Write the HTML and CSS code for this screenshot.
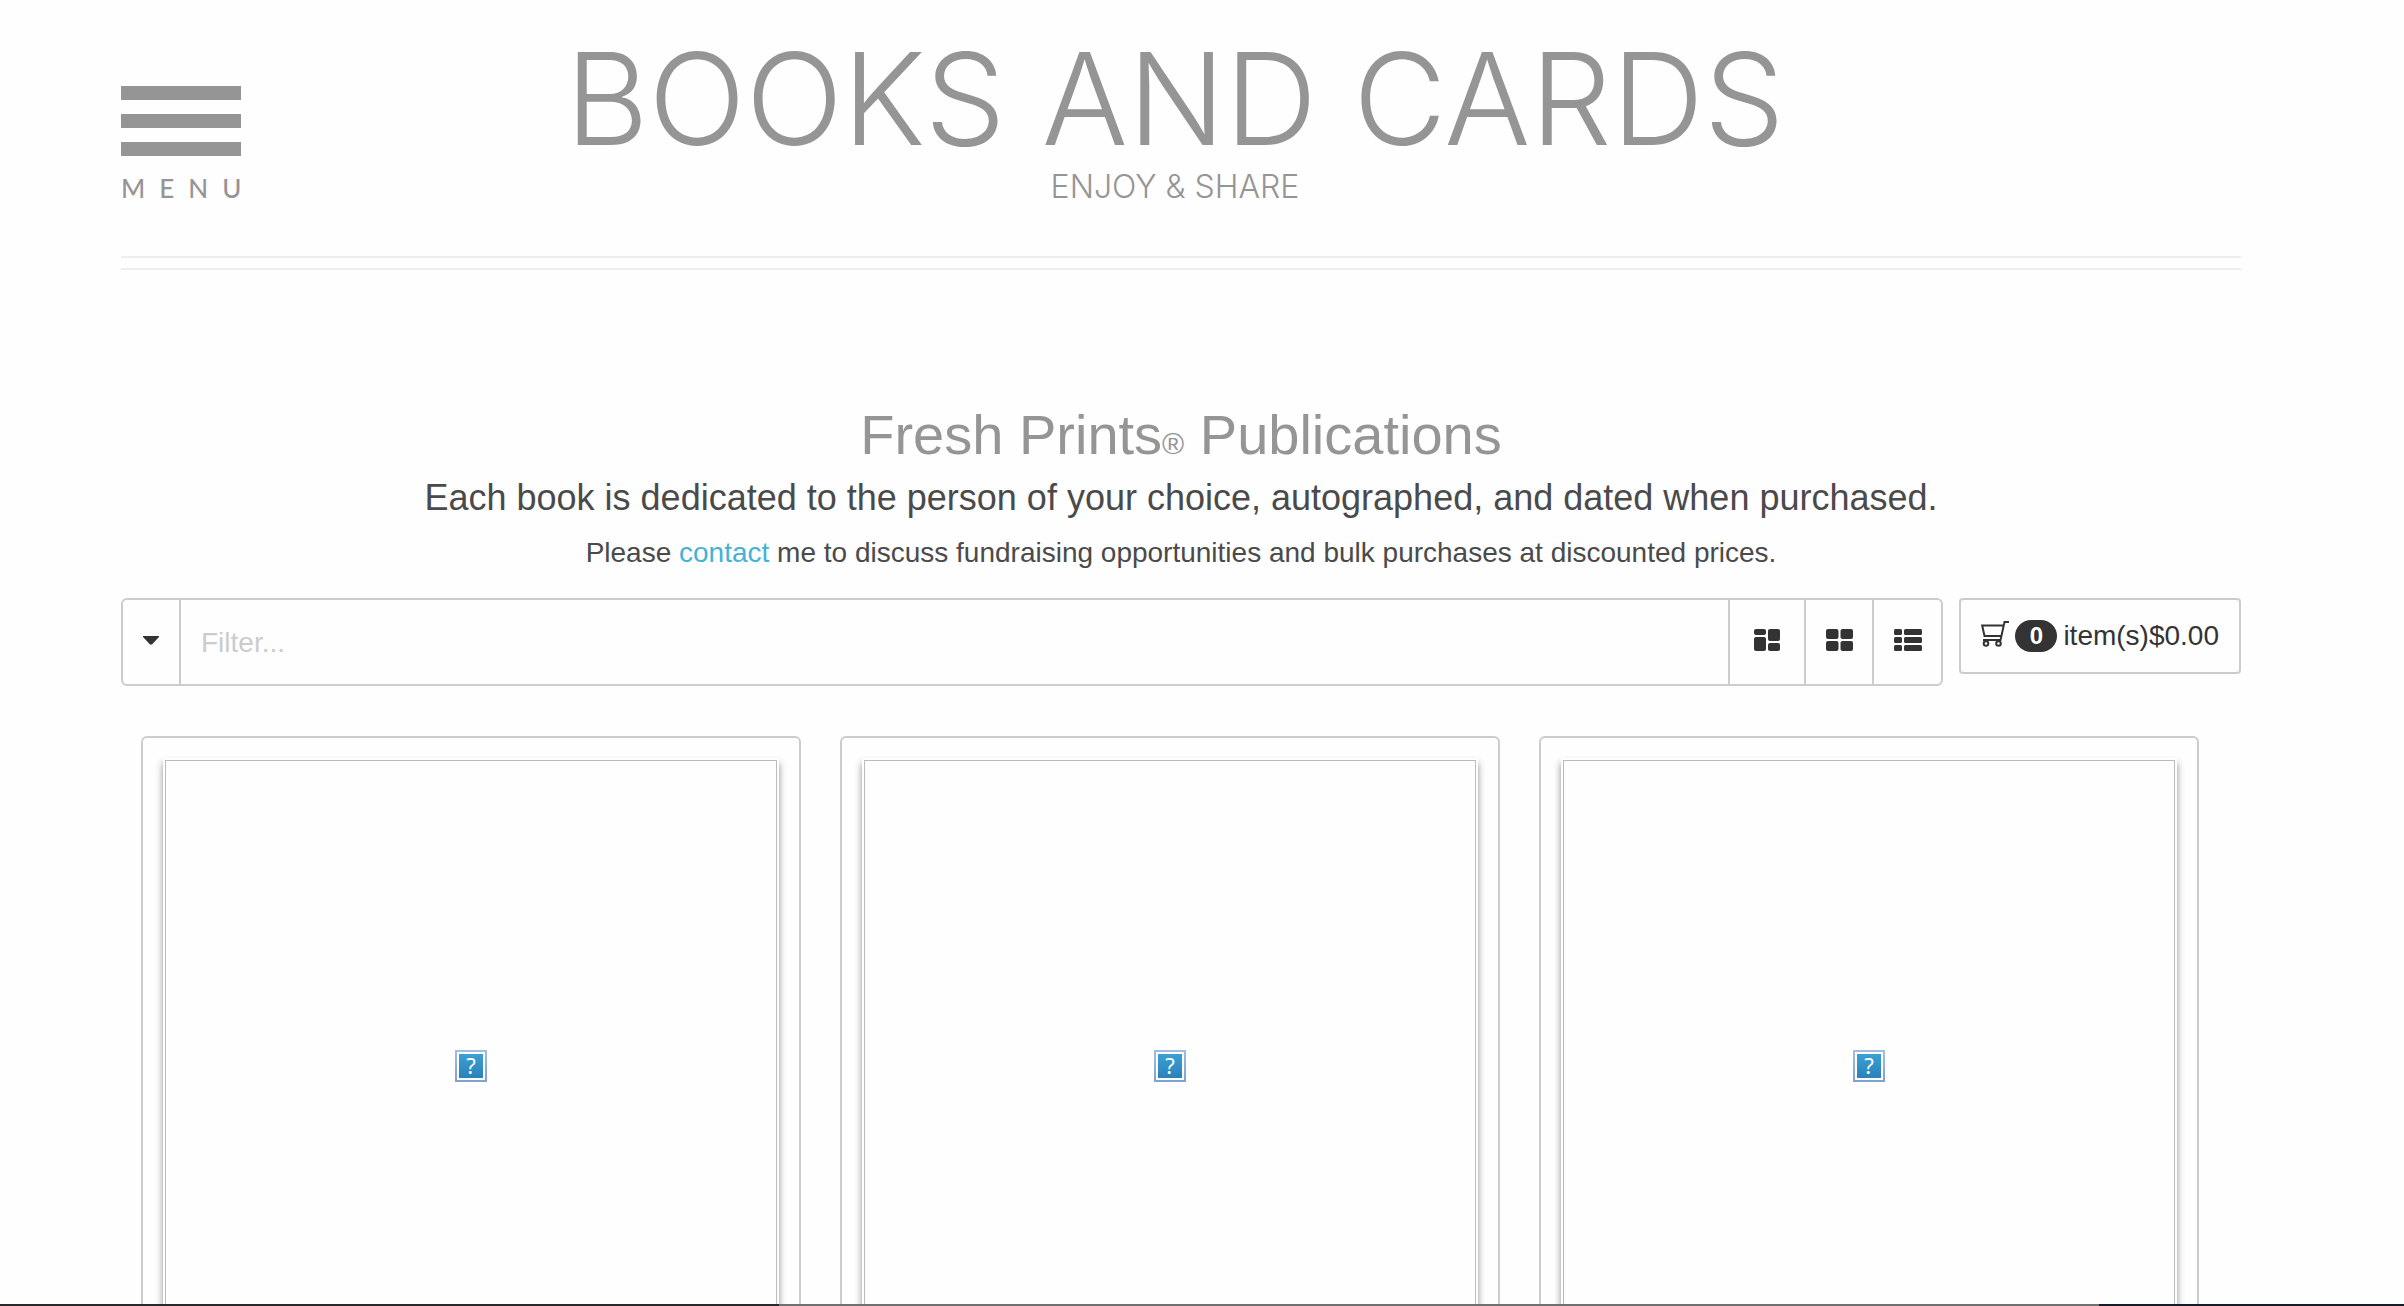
FILE: index.html
```html
<!DOCTYPE html>
<html lang="en">
<head>
  <meta charset="UTF-8">
  <meta name="viewport" content="width=device-width, initial-scale=1">
  <title>Books and Cards</title>
  <link rel="stylesheet" href="styles.css">
</head>
<body>
  <div class="page">
    <header class="header">
      <button class="menu" type="button">
        <span class="bar"></span>
        <span class="bar"></span>
        <span class="bar"></span>
        <span class="menu-text">MENU</span>
      </button>
      <div class="brand">
        <h1>BOOKS AND CARDS</h1>
        <p>ENJOY &amp; SHARE</p>
      </div>
    </header>

    <section class="intro">
      <h2>Fresh Prints<small>®</small> Publications</h2>
      <p class="lead">Each book is dedicated to the person of your choice, autographed, and dated when purchased.</p>
      <p class="note">Please <a href="#contact">contact</a> me to discuss fundraising opportunities and bulk purchases at discounted prices.</p>
    </section>

    <div class="tools">
      <div class="filter">
        <button class="drop" type="button" aria-label="Filter options">
          <svg width="16" height="9" viewBox="0 0 16 9"><path d="M0 0h16v1L9 8.500H7L0 1z"/></svg>
        </button>
        <input type="text" placeholder="Filter..." aria-label="Filter">
        <button class="view mixed" type="button" aria-label="Mixed view">
          <svg width="26" height="22" viewBox="0 0 26 22">
            <rect width="12" height="6" rx="2"/><rect y="8" width="12" height="14" rx="2"/>
            <rect x="14" width="12" height="12" rx="2"/><rect x="14" y="14" width="12" height="8" rx="2"/>
          </svg>
        </button>
        <button class="view grid" type="button" aria-label="Grid view">
          <svg width="27" height="22" viewBox="0 0 27 22">
            <rect width="12.500" height="10" rx="2"/><rect x="14.500" width="12.500" height="10" rx="2"/>
            <rect y="12" width="12.500" height="10" rx="2"/><rect x="14.500" y="12" width="12.500" height="10" rx="2"/>
          </svg>
        </button>
        <button class="view list" type="button" aria-label="List view">
          <svg width="28" height="22" viewBox="0 0 28 22">
            <rect width="8" height="6" rx="1.500"/><rect x="10" width="18" height="6" rx="1.500"/>
            <rect y="8" width="8" height="6" rx="1.500"/><rect x="10" y="8" width="18" height="6" rx="1.500"/>
            <rect y="16" width="8" height="6" rx="1.500"/><rect x="10" y="16" width="18" height="6" rx="1.500"/>
          </svg>
        </button>
      </div>
      <button class="cart" type="button">
        <svg width="28" height="26" viewBox="0 0 28 26">
          <path d="M28 1h-4.500L19.500 19H2M23 4.500H1.200L3.500 15H20.500"/>
          <circle cx="5" cy="22.500" r="2.300"/><circle cx="17.500" cy="22.500" r="2.300"/>
        </svg>
        <span class="count">0</span>
        <span>item(s)$0.00</span>
      </button>
    </div>

    <!-- products -->
    <main class="products">
      <article class="card">
        <div class="thumb">
          <svg class="missing" viewBox="0 0 32 32">
            <defs>
              <linearGradient id="frame" x2="0" y2="1"><stop stop-color="#a6bcde"/><stop offset="1" stop-color="#7da2d0"/></linearGradient>
              <linearGradient id="fill" x2="0" y2="1"><stop stop-color="#3aa0d5"/><stop offset="1" stop-color="#2a82ba"/></linearGradient>
            </defs>
            <rect width="32" height="32" fill="url(#frame)"/><rect x="2" y="2" width="28" height="28" fill="#fff"/><rect x="4" y="4" width="24" height="24" fill="url(#fill)"/>
            <text x="16" y="24">?</text>
          </svg>
        </div>
      </article>
      <article class="card">
        <div class="thumb">
          <svg class="missing" viewBox="0 0 32 32">
            <rect width="32" height="32" fill="url(#frame)"/><rect x="2" y="2" width="28" height="28" fill="#fff"/><rect x="4" y="4" width="24" height="24" fill="url(#fill)"/>
            <text x="16" y="24">?</text>
          </svg>
        </div>
      </article>
      <article class="card">
        <div class="thumb">
          <svg class="missing" viewBox="0 0 32 32">
            <rect width="32" height="32" fill="url(#frame)"/><rect x="2" y="2" width="28" height="28" fill="#fff"/><rect x="4" y="4" width="24" height="24" fill="url(#fill)"/>
            <text x="16" y="24">?</text>
          </svg>
        </div>
      </article>
    </main>
  </div>
  <div class="strip"></div>
</body>
</html>
```

FILE: styles.css
```css
* { box-sizing: border-box; }
body {
  margin: 0;
  height: 100vh;
  overflow: hidden;
  background: #fefefe;
  color: #4a4a4a;
  font-family: "Liberation Sans", Arial, sans-serif;
}
h1, h2, p { margin: 0; font-weight: normal; }
button { margin: 0; padding: 0; border: 0; background: none; font: inherit; color: #333; cursor: pointer; }
svg { display: block; fill: #333; }

.page { padding: 0 163px 0 121px; }

/* header */
.header {
  display: grid;
  grid-template-columns: 120px 1fr 132px;
  height: 270px;
  border-bottom: 2px solid #eee;
  color: #959595;
}
.header::after {
  content: "";
  grid-column: 1 / -1;
  align-self: end;
  height: 2px;
  margin-bottom: 10px;
  background: #eee;
}
.menu {
  display: flex;
  flex-direction: column;
  gap: 14px;
  padding-top: 86px;
  color: #959595;
}
.bar { width: 120px; height: 14px; background: #959595; }
.menu-text {
  padding-top: 3px;
  font: 500 26px/30px Lato, sans-serif;
  letter-spacing: 14px;
  white-space: nowrap;
}
.brand { padding-top: 34px; text-align: center; }
.brand h1 { font: 300 128px/130px Inter, sans-serif; white-space: nowrap; }
.brand p { padding-top: 6px; font: 300 32px/34px Inter, sans-serif; }

/* intro */
.intro { padding-top: 131px; text-align: center; }
.intro h2 { color: #959595; font-size: 56px; line-height: 68px; }
.intro h2 small { font-size: 30px; }
.lead { font-size: 36px; line-height: 56px; margin-top: -8px; }
.note { font-size: 28px; line-height: 54px; }
.note a { color: #42b3d5; text-decoration: none; }

/* toolbar */
.tools { display: flex; align-items: flex-start; gap: 16px; margin-top: 18px; }
.filter {
  display: flex;
  flex: 1;
  height: 88px;
  border: 2px solid #ccc;
  border-radius: 6px;
}
.filter button { display: flex; align-items: center; justify-content: center; }
.filter .drop { width: 56px; padding-bottom: 4px; }
.filter input {
  flex: 1;
  min-width: 0;
  padding: 2px 20px 0;
  border: 0;
  border-left: 2px solid #ccc;
  outline: 0;
  background: none;
  font: 28px "Liberation Sans", Arial, sans-serif;
  color: #333;
}
.filter input::placeholder { color: #ccc; opacity: 1; }
.filter .view { border-left: 2px solid #ccc; padding-bottom: 4px; }
.mixed { width: 76px; }
.grid { width: 68px; }
.list { width: 69px; }
.cart {
  display: flex;
  align-items: center;
  gap: 6px;
  height: 76px;
  padding: 0 20px;
  border: 2px solid #ccc;
  border-radius: 4px;
  font-size: 28px;
}
.cart svg { margin-bottom: 4px; fill: none; stroke: #333; stroke-width: 2px; }
.count {
  width: 42px;
  border-radius: 16px;
  background: #333;
  color: #fff;
  font-size: 24px;
  font-weight: bold;
  line-height: 32px;
}

/* products */
.products {
  display: grid;
  grid-template-columns: repeat(3, 1fr);
  gap: 39px;
  padding: 50px 42px 0 20px;
}
.card { padding: 20px; border: 2px solid #ccc; border-radius: 6px; }
.thumb {
  display: flex;
  align-items: center;
  justify-content: center;
  aspect-ratio: 1;
  background: #fefefe;
  outline: 1px solid #bbb;
  outline-offset: -3px;
  box-shadow: 0 5px 7px rgba(0, 0, 0, .45);
}
.missing { width: 32px; height: 32px; }
.missing text { fill: #fff; font: 22px "Noto Sans", sans-serif; text-anchor: middle; }

/* bottom edge */
.strip {
  position: fixed;
  right: 0;
  bottom: 0;
  left: 0;
  height: 2px;
  background: linear-gradient(90deg, #29282f 32.4%, #707070 32.4%, #707070 87.3%, #151b2b 87.3%);
}
```
